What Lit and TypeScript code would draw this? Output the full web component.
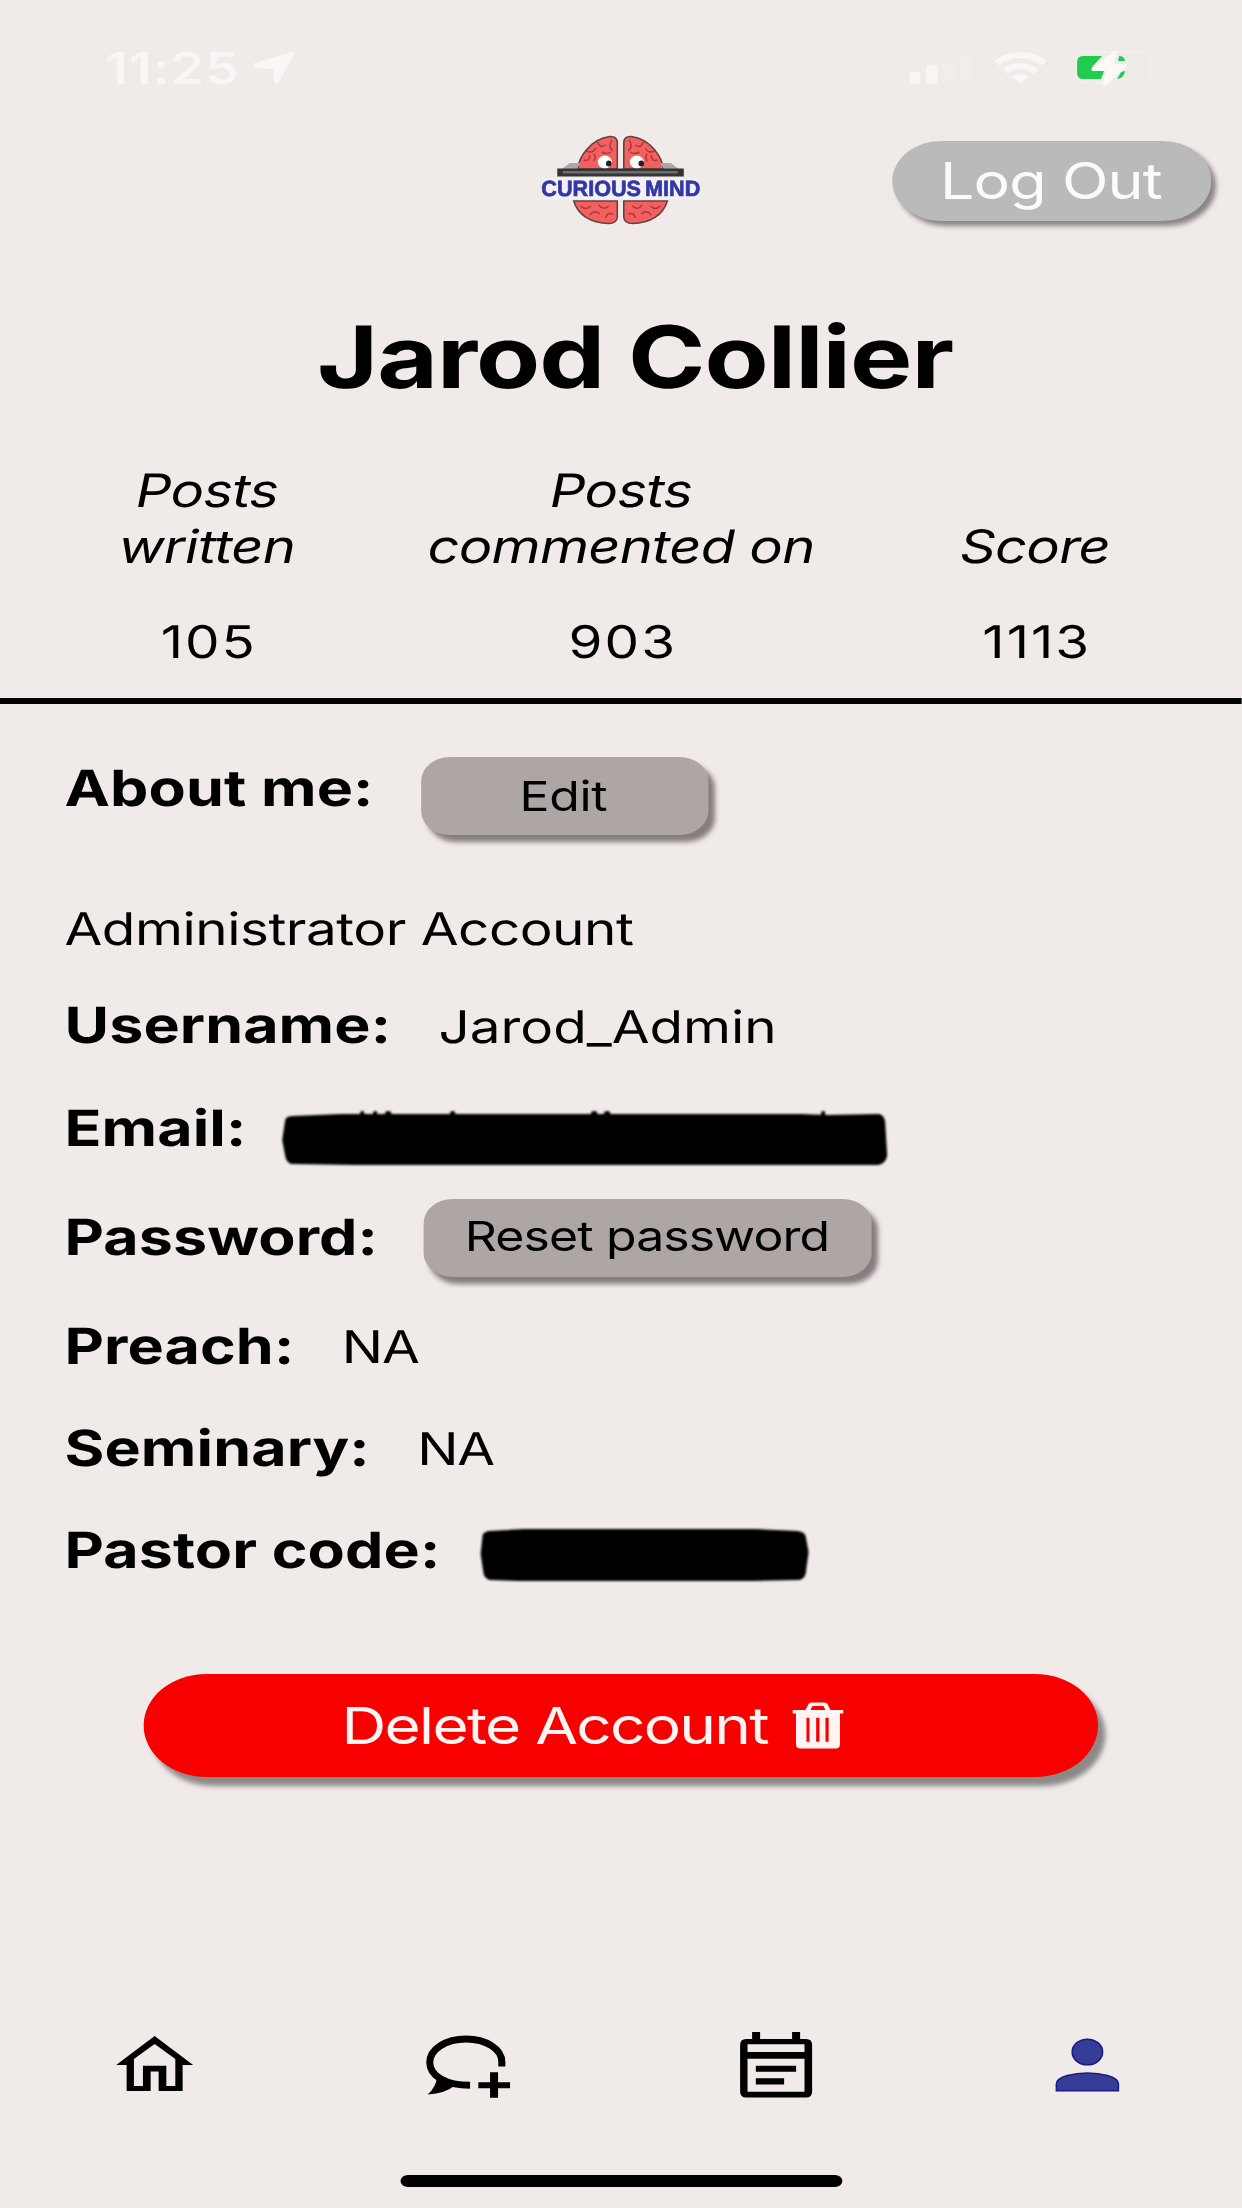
import { LitElement, html, css, svg, type TemplateResult } from "lit";
import { customElement } from "lit/decorators.js";

interface Stat {
  title: TemplateResult;
  value: number;
}

/* Top bar: clock, signal, Wi-Fi and battery */
@customElement("status-bar")
export class StatusBar extends LitElement {
  static styles = css`
    :host {
      display: flex;
      align-items: center;
      height: 136px;
      padding: 0 calc(84px / var(--stretch)) 0 86.5px;
      color: #f9f7f6;
      font-size: 44px;
      font-weight: 600;
      letter-spacing: 0.8px;
    }
    .arrow { width: calc(43px / var(--stretch)); height: 35px; margin-left: 10px; }
    .signal { width: calc(62px / var(--stretch)); height: 34px; margin-left: auto; }
    .wifi { width: calc(52px / var(--stretch)); height: 32px; margin: 0 24px 0 19px; }
    .battery { width: calc(82px / var(--stretch)); height: 40px; }
    svg { display: block; }
  `;

  render() {
    return html`
      <span>11:25</span>
      <svg class="arrow" viewBox="0 0 43 35" preserveAspectRatio="none">
        <path fill="#f9f7f6" d="M40 1Q43 0 42 4L27 31Q23 36 22 30V20Q22 18 19 18L4 17Q-2 15 3 12Z" />
      </svg>
      <svg class="signal" viewBox="0 0 62 34" preserveAspectRatio="none">
        <rect x="0" y="21" width="11" height="12" rx="2" fill="#f9f7f6" />
        <rect x="17" y="14" width="11" height="19" rx="2" fill="#f9f7f6" />
        <rect x="34" y="7" width="11" height="26" rx="2" fill="#f2ecea" />
        <rect x="51" y="1" width="10" height="32" rx="2" fill="#f2ecea" />
      </svg>
      <svg class="wifi" viewBox="0 0 52 32" preserveAspectRatio="none" fill="none" stroke="#f9f7f6">
        <path stroke-width="6" d="M2 11.5C15 0 37 0 50 11.5" />
        <path stroke-width="6" d="M10.5 19.5C19 12.500 33 12.500 41.500 19.500" />
        <path fill="#f9f7f6" stroke="none" d="M18 25Q26 19 34 25L26 32Z" />
      </svg>
      <svg class="battery" viewBox="0 0 82 40" preserveAspectRatio="none">
        <rect x="0.500" y="4" width="74" height="31" rx="9" fill="none" stroke="#f3efed" stroke-width="2" />
        <path d="M78 15Q82 19.500 78 24Z" fill="#f3efed" />
        <path d="M7 8H26L16 19Q14 23 18 23H28L25 31H7Q1 31 1 25V14Q1 8 7 8Z" fill="#1fcc4e" />
        <path d="M43 8Q48 8 49 13H42ZM49 23Q48 30 41 31L45 24Z" fill="#1fcc4e" />
        <path d="M39 2L16 21Q15 23 18 23H30L27 36Q27 39 31 36L50 19Q52 16 49 16H38L41 4Z" fill="#fbfaf9" />
      </svg>
    `;
  }
}

/* Brain with a pair of eyes above the wordmark */
@customElement("brand-logo")
export class BrandLogo extends LitElement {
  static styles = css`
    :host { display: block; }
    svg { display: block; width: calc(200px / var(--stretch)); height: 120px; }
    .word { font: 700 22px "Liberation Sans", Arial, sans-serif; word-spacing: -2px; }
  `;

  render() {
    const half = svg`
      <path d="M58 49C59 38 70 19 90 16.500Q97.500 16 97.500 23V49Z" fill="#f5605f" stroke="#5f4444" stroke-width="1.600" />
      <path d="M54 81H97.500V97Q97 103.500 89 103.500C71 103 58 95 54 81Z" fill="#f5605f" stroke="#5f4444" stroke-width="1.600" />
      <path d="M64 40Q70 42 70 35M67 31Q73 34 76 28M78 22Q80 29 86 25M92 20Q88 27 93 31M74 41Q77 37 74 34M82 32Q87 35 91 32M61 86Q66 91 71 86M70 95Q75 89 80 94M79 85Q84 91 89 86M86 98Q87 92 93 94"
        fill="none" stroke="#a33a40" stroke-width="1.500" />`;
    return html`
      <svg viewBox="0 0 200 120" preserveAspectRatio="none">
        ${half}
        <g transform="translate(201.500 0) scale(-1 1)">${half}</g>
        <path d="M42 49L50 43H61L57 49ZM159 49L151 43H140L144 49Z" fill="#a9a9a9" />
        <ellipse cx="85" cy="42" rx="7" ry="6.500" fill="#fff" />
        <ellipse cx="117" cy="42" rx="7" ry="6.500" fill="#fff" />
        <ellipse cx="89" cy="43.500" rx="2.800" ry="3" fill="#222" />
        <ellipse cx="121.500" cy="43.500" rx="2.800" ry="3" fill="#222" />
        <rect x="37.500" y="48.500" width="126.500" height="8" fill="#343434" />
        <rect x="43" y="51" width="115" height="2.500" fill="#6e6e6e" />
        <rect x="24" y="58" width="154" height="21" fill="#f5f1f2" />
        <text class="word" x="21.500" y="76" textLength="159" lengthAdjust="spacingAndGlyphs" fill="#3237a6" stroke="#3237a6" stroke-width="0.700">CURIOUS MIND</text>
      </svg>
    `;
  }
}

/* Bottom tab bar */
@customElement("tab-bar")
export class TabBar extends LitElement {
  static styles = css`
    :host {
      display: grid;
      grid-template-columns: repeat(4, 1fr);
      align-items: center;
      justify-items: center;
      height: 100px;
    }
    svg { display: block; overflow: visible; }
    .home { width: calc(78px / var(--stretch)); height: 56px; margin: 0 1px 3px 0; }
    .chat { width: calc(84px / var(--stretch)); height: 63px; margin: 3px 0 0 3px; }
    .calendar { width: calc(72px / var(--stretch)); height: 66px; }
    .person { width: calc(64px / var(--stretch)); height: 54px; margin-left: 1px; }
  `;

  render() {
    return html`
      <svg class="home" viewBox="0 0 78 56" preserveAspectRatio="none">
        <path fill-rule="evenodd" d="M39 0L77.500 29H67V55H43V35.600H35V55H11V29H.5ZM39 8L18.300 23V50H27.300V29.700H50.700V50H59.700V23Z" />
      </svg>
      <svg class="chat" viewBox="0 0 84 63" preserveAspectRatio="none">
        <path d="M75.800 31.500V27C75.800 14 60 4 40 4S3.700 14 3.700 27.500C3.700 41 20 50.300 44 50.300" fill="none" stroke="#000" stroke-width="7" />
        <path d="M11 42Q10 52 1.700 59.500Q20 58 28 51Z" />
        <path d="M52.300 47.300H64V37.300H72V47.300H84V53.300H72V62.700H64V53.300H52.300Z" />
      </svg>
      <svg class="calendar" viewBox="0 0 72 66" preserveAspectRatio="none">
        <path fill-rule="evenodd" d="M12 0H20V7H52V0H60V7H66Q72 7 72 13V59.500Q72 65.500 66 65.500H6Q0 65.500 0 59.500V13Q0 7 6 7H12ZM7.400 12.300V20H64.400V12.300ZM7.400 26.700V59.700H64.400V26.700Z" />
        <path d="M15.700 33.700H56V39.700H15.700ZM15.700 46.300H44V52.600H15.700Z" />
      </svg>
      <svg class="person" viewBox="0 0 64 54" preserveAspectRatio="none" fill="#363d96" stroke="#1a1a8a" stroke-width="1.600">
        <ellipse cx="32" cy="14" rx="15.200" ry="12.800" />
        <path d="M1 52.700V46C1 38 20 35 32 35S63 38 63 46V52.700Z" />
      </svg>
    `;
  }
}

@customElement("app-root")
export class AppRoot extends LitElement {
  static styles = css`
    :host {
      --stretch: 1.2173;
      display: block;
      width: 1242px;
      height: 2208px;
      overflow: hidden;
      background: #f0eae8;
    }
    /* The screen is laid out narrow and widened to the full window. */
    .screen {
      display: flex;
      flex-direction: column;
      width: calc(1242px / var(--stretch));
      height: 2208px;
      transform: scaleX(var(--stretch));
      transform-origin: 0 0;
      font-family: Inter, "Liberation Sans", sans-serif;
      color: #000;
      text-rendering: geometricPrecision;
    }
    .screen > * { flex-shrink: 0; }
    status-bar { margin-bottom: -16px; }
    header {
      display: grid;
      grid-template-columns: 1fr auto 1fr;
      align-items: center;
      height: 120px;
    }
    brand-logo { grid-column: 2; margin-right: 2px; }
    button {
      border: 0;
      padding: 0;
      font: inherit;
      color: inherit;
      white-space: nowrap;
    }
    .logout {
      justify-self: end;
      width: 262px;
      height: 80px;
      margin: 2px 25px 0 0;
      padding-right: 2px;
      border-radius: 40px;
      background: #bababa;
      box-shadow: 4px 5px 5px #8b8485;
      color: #fbfbfb;
      font-size: 50px;
      letter-spacing: -0.7px;
      box-sizing: border-box;
    }
    h1 {
      margin: 67px 0 0 23px;
      font-size: 86px;
      line-height: 100px;
      font-weight: 700;
      letter-spacing: -0.8px;
      text-align: center;
    }
    .stats {
      display: grid;
      grid-template-columns: repeat(3, 1fr);
      align-items: end;
      height: 234.500px;
      padding-top: 56px;
      border-bottom: 6px solid #000;
      text-align: center;
      line-height: 56px;
    }
    .stat { padding-bottom: 27.500px; }
    .stat-title { font-size: 46px; font-style: italic; letter-spacing: -0.6px; }
    .stat-value { margin-top: 39px; padding-left: 3px; font-size: 45px; letter-spacing: 1.7px; }
    .details {
      display: grid;
      grid-template-rows: 100px 139px 96px 110px 108px 110px 94px 110px;
      margin-top: 35.500px;
      padding-left: 53px;
    }
    .row { display: flex; align-items: center; gap: 39px; font-size: 45px; }
    .label { font-size: 50px; font-weight: 700; letter-spacing: 0.1px; }
    .bio { height: 100px; align-self: end; letter-spacing: -0.38px; }
    .short { letter-spacing: -0.9px; margin-top: -2px; }
    .action {
      height: 78px;
      border-radius: 24px;
      background: #aea5a5;
      box-shadow: 5px 7px 5px #857d7e;
      font-size: 41px;
      letter-spacing: -0.3px;
    }
    .edit { width: 236px; margin-top: 14px; padding-right: 2px; }
    .reset { width: 368px; margin-left: -2px; padding-bottom: 4px; letter-spacing: -0.7px; }
    .masked { display: block; margin-left: -10px; overflow: visible; filter: blur(0.8px); }
    .masked-email { width: calc(606px / var(--stretch)); height: 56px; margin-top: 18px; }
    .masked-code { width: calc(330px / var(--stretch)); height: 54px; margin: 8px 0 0 -7px; }
    .delete {
      display: flex;
      align-items: center;
      justify-content: center;
      gap: 20px;
      width: 784px;
      height: 103px;
      margin: 68px auto 0;
      padding-right: 47px;
      border-radius: 51.500px;
      background: #f80000;
      box-shadow: 6px 9px 5px #8d8989;
      color: #fff4f4;
      font-size: 51px;
      letter-spacing: -1.4px;
      box-sizing: border-box;
    }
    .trash { width: calc(51px / var(--stretch)); height: 47px; }
    tab-bar { margin-top: 238px; }
    .home-indicator {
      width: 363px;
      height: 12px;
      margin: 59.500px auto 0;
      border-radius: 7px;
      background: #000;
    }
  `;

  private stats: Stat[] = [
    { title: html`Posts<br />written`, value: 105 },
    { title: html`Posts<br />commented on`, value: 903 },
    { title: html`Score`, value: 1113 },
  ];

  private row(label: string, content: unknown) {
    return html`<div class="row"><span class="label">${label}</span>${content}</div>`;
  }

  render() {
    return html`
      <div class="screen">
        <status-bar></status-bar>
        <header>
          <brand-logo></brand-logo>
          <button class="logout">Log Out</button>
        </header>
        <h1>Jarod Collier</h1>
        <section class="stats">
          ${this.stats.map(
            (s) => html`<div class="stat">
              <div class="stat-title">${s.title}</div>
              <div class="stat-value">${s.value}</div>
            </div>`
          )}
        </section>
        <section class="details">
          ${this.row("About me:", html`<button class="action edit">Edit</button>`)}
          <div class="row bio">Administrator Account</div>
          ${this.row("Username:", html`<span>Jarod_Admin</span>`)}
          ${this.row(
            "Email:",
            html`<svg class="masked masked-email" viewBox="0 0 606 56" preserveAspectRatio="none">
              <path d="M4 10Q5 6 12 6L60 4H520L545 5L598 4Q603 5 604 12L606 46Q604 54 597 55H75L10 54Q5 52 4 46L1 30Z" />
              <path d="M79 5V2Q81 0 83 2V5ZM92 5V2Q94 0 96 2V5ZM104 5V2Q107 0 110 2V5ZM169 5V2Q171 0 174 2V5ZM310 5V2Q313 0 316 2V5ZM323 5V2Q326 0 329 2V5ZM540 6V2Q542 0 544 2V6Z" />
            </svg>`
          )}
          ${this.row("Password:", html`<button class="action reset">Reset password</button>`)}
          ${this.row("Preach:", html`<span class="short">NA</span>`)}
          ${this.row("Seminary:", html`<span class="short">NA</span>`)}
          ${this.row(
            "Pastor code:",
            html`<svg class="masked masked-code" viewBox="0 0 330 54" preserveAspectRatio="none">
              <path d="M3 7Q4 4 9 3L45 1H275L318 3Q325 4 326 8L329 24L326 46Q324 52 318 52L270 53H40L10 52Q5 50 4 46L1 26Z" />
            </svg>`
          )}
        </section>
        <button class="delete">
          <span>Delete Account</span>
          <svg class="trash" viewBox="0 0 51 47" preserveAspectRatio="none">
            <path fill="#fff4f4" fill-rule="evenodd"
              d="M13 8L16 2Q17 .5 19 .5H32Q34 .5 35 2L38 8H51V11.500H47.500V42Q47.500 46.500 43 46.500H8Q3.500 46.500 3.500 42V11.500H0V8ZM18 8H33L31 4H20ZM14 15.700V39.700H17V15.700ZM23.700 15.700V39.700H27V15.700ZM33 15.700V39.700H36.200V15.700Z" />
          </svg>
        </button>
        <tab-bar></tab-bar>
        <div class="home-indicator"></div>
      </div>
    `;
  }
}
